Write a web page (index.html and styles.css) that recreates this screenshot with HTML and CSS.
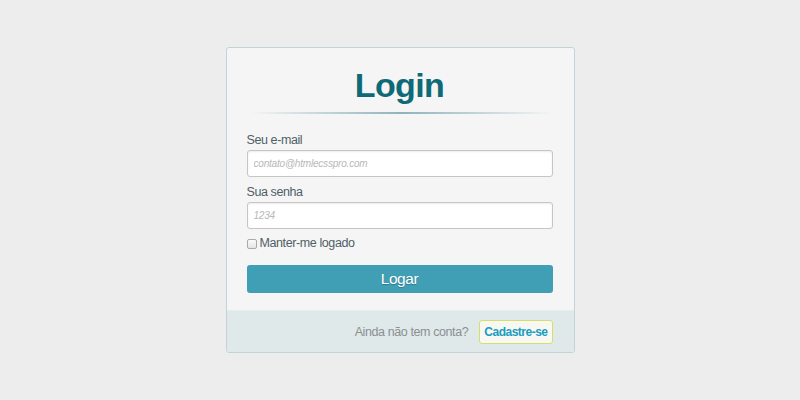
FILE: index.html
```html
<!DOCTYPE html>
<html lang="pt-BR">

<head>
    <meta charset="UTF-8">
    <meta name="viewport" content="width=device-width, initial-scale=1.0">
    <title>Login</title>
    <link rel="stylesheet" href="styles.css">
</head>

<body>

    <div class="login-box">
        <form class="login-form">
            <h1 class="login-title">Login</h1>

            <label class="field-label" for="email">Seu e-mail</label>
            <input class="field-input" type="email" id="email" placeholder="contato@htmlecsspro.com">

            <label class="field-label" for="senha">Sua senha</label>
            <input class="field-input" type="password" id="senha" placeholder="1234">

            <label class="remember">
                <input type="checkbox" class="remember-check">
                Manter-me logado
            </label>

            <button type="button" class="login-btn">Logar</button>
        </form>

        <div class="login-footer">
            <span class="footer-text">Ainda não tem conta?</span>
            <a href="#" class="signup-link">Cadastre-se</a>
        </div>
    </div>

</body>

</html>
```
FILE: styles.css
```css
/* Login page */
body {
    margin: 0;
    background-color: #ededed;
    font-family: "Liberation Sans", Arial, sans-serif;
}

.login-box {
    width: 347px;
    margin: 47px auto 0;
    background-color: #f5f5f5;
    border: 1px solid #c3d3d8;
    border-radius: 3px;
    overflow: hidden;
}

.login-form {
    display: flex;
    flex-direction: column;
    padding: 16px 21px 17px 20px;
}

.login-title {
    margin: 0 0 19px;
    padding-bottom: 8px;
    font-size: 34px;
    line-height: 42px;
    letter-spacing: -0.6px;
    font-weight: bold;
    text-align: center;
    color: #0d6a76;
    position: relative;
}

.login-title::after {
    content: "";
    position: absolute;
    left: 3px;
    right: 0;
    bottom: 0;
    height: 2px;
    background: linear-gradient(to right, rgba(138, 177, 184, 0), #8fb3ba 50%, rgba(138, 177, 184, 0));
}

.field-label {
    font-size: 12.5px;
    line-height: 15px;
    letter-spacing: -0.4px;
    color: #4f5f66;
    margin-bottom: 2px;
}

.field-input {
    height: 27px;
    box-sizing: border-box;
    margin: 0 0 8px;
    padding: 0 6px;
    border: 1px solid #c5c5c5;
    border-radius: 3px;
    background-color: #fff;
    box-shadow: inset 0 1px 2px rgba(0, 0, 0, 0.08);
    font-family: "Liberation Sans", Arial, sans-serif;
    font-size: 10px;
    letter-spacing: -0.2px;
}

.field-input::placeholder {
    color: #b8b8b8;
    font-style: italic;
}

.remember {
    display: flex;
    align-items: center;
    font-size: 12.5px;
    line-height: 15px;
    letter-spacing: -0.4px;
    color: #4f5f66;
    margin-top: -1px;
}

.remember-check {
    appearance: none;
    width: 10px;
    height: 10px;
    margin: 0 3px 0 0;
    border: 1px solid #a9a9a9;
    border-radius: 2px;
    background: linear-gradient(#fafafa, #e4e4e4);
}

.login-btn {
    margin-top: 14px;
    height: 28px;
    border: none;
    border-radius: 3px;
    background-color: #409fb5;
    color: #fff;
    font-family: "Liberation Sans", Arial, sans-serif;
    font-size: 15.5px;
    letter-spacing: -0.4px;
    text-shadow: 0 1px 1px rgba(0, 0, 0, 0.25);
    cursor: pointer;
}

.login-footer {
    display: flex;
    justify-content: flex-end;
    align-items: center;
    gap: 11px;
    height: 41px;
    padding: 0 21px;
    background-color: #e0e9ea;
    border-top: 1px solid #e6eced;
}

.footer-text {
    font-size: 12.5px;
    letter-spacing: -0.4px;
    color: #8a8f91;
}

.signup-link {
    display: inline-block;
    padding: 4px 4px;
    font-size: 12px;
    letter-spacing: -0.5px;
    font-weight: bold;
    color: #1a9bc2;
    text-decoration: none;
    background-color: #f6f8f1;
    border: 1px solid #d6de6a;
    border-radius: 3px;
}
```
